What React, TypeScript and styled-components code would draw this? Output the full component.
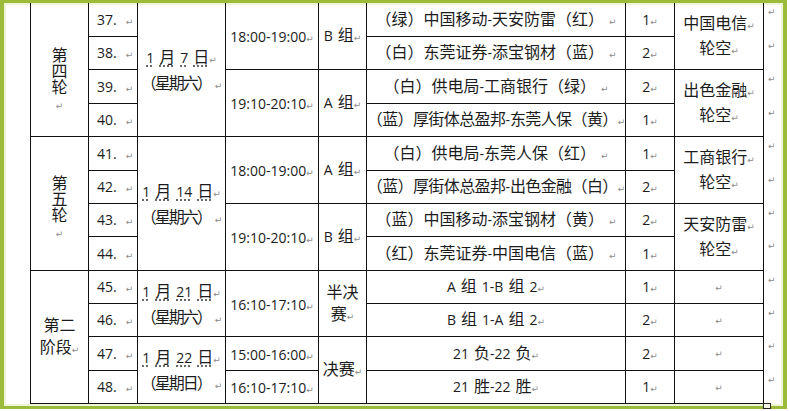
import React from "react";
import styled, { createGlobalStyle } from "styled-components";

const GlobalStyle = createGlobalStyle`
  html, body { margin: 0; padding: 0; background: #ffffff; }
  body { width: 790px; height: 411px; overflow: hidden; }
`;

const Frame = styled.div`
  position: relative;
  box-sizing: border-box;
  width: 787px;
  height: 409px;
  border-style: solid;
  border-color: #9cbb3a;
  border-width: 3px 4px 3px 4px;
  padding-left: 26px;
  background: #fff;
  box-shadow: inset 2px 2px 0 #eef5d2, inset -2px -2px 0 #eef5d2;
`;

const Grid = styled.div`
  display: grid;
  grid-template-columns: 58px 49px 88px 93px 48px 259px 49px 89px 19px;
  grid-template-rows: 34px 33px 34px 33px 34px 33px 33px 34px 33px 33px 34px 33px;
  border-left: 1px solid #111;
  width: max-content;
  font-family: "Noto Sans CJK SC", "Noto Sans", sans-serif;
  font-size: 16px;
  color: #1c1c1c;
`;

const Cell = styled.div<{ $rows?: number; $left?: boolean; $lh?: number; $pt?: number }>`
  box-sizing: border-box;
  grid-row: span ${(p) => p.$rows ?? 1};
  border-right: 1px solid #111;
  border-bottom: 1px solid #111;
  display: flex;
  align-items: center;
  justify-content: ${(p) => (p.$left ? "flex-start" : "center")};
  padding-left: ${(p) => (p.$left ? "8px" : "0")};
  padding-top: ${(p) => p.$pt ?? 0}px;
  text-align: center;
  white-space: nowrap;
  line-height: ${(p) => p.$lh ?? 20}px;
  overflow: hidden;
`;

const Para = styled.div<{ $tight?: number }>`
  white-space: pre;
  letter-spacing: ${(p) => p.$tight ?? 0}px;
`;

const EndCell = styled.div`
  display: flex;
  align-items: flex-start;
  padding: 3px 0 0 4px;
  line-height: 12px;
`;

const Latin = styled.span`
  font-family: "Open Sans", "Noto Sans", sans-serif;
  font-size: 14px;
  letter-spacing: 0;
`;

const Space = styled.span`
  display: inline-block;
  width: 5px;
`;

const Dotted = styled.span`
  text-decoration: underline dotted #444;
  text-underline-offset: 3px;
`;

const Mark = styled.span<{ $gap?: number }>`
  font-family: "DejaVu Sans", sans-serif;
  font-size: 9px;
  letter-spacing: 0;
  color: #8c8c8c;
  margin-left: ${(p) => p.$gap ?? 0}px;
`;

const Handle = styled.div`
  position: absolute;
  left: 759px;
  bottom: -3px;
  width: 6px;
  height: 4px;
  border: 1px solid #222;
  background: #f4f8e4;
`;

const CJK = /([\u2e80-\u9fff\u3000-\u303f\uff00-\uffef]+)/;

function Latins({ s }: { s: string }) {
  const parts = s.split(" ");
  return (
    <>
      {parts.map((p, i) => (
        <React.Fragment key={i}>
          {i > 0 ? <Space /> : null}
          {p ? <Latin>{p}</Latin> : null}
        </React.Fragment>
      ))}
    </>
  );
}

function Mixed({ text }: { text: string }) {
  return (
    <>
      {text
        .split(CJK)
        .filter(Boolean)
        .map((s, i) => (CJK.test(s) ? <span key={i}>{s}</span> : <Latins key={i} s={s} />))}
    </>
  );
}

const M = ({ gap }: { gap?: number }) => <Mark $gap={gap}>↵</Mark>;

function Stage({ lines, rows, pt }: { lines: string[]; rows: number; pt?: number }) {
  const vertical = lines.length > 2;
  return (
    <Cell $rows={rows} $lh={vertical ? 16 : 22} $pt={pt ?? (vertical ? 8 : 0)}>
      <Para>
        {lines.map((l, i) => (
          <React.Fragment key={i}>
            {l}
            {!vertical && i === lines.length - 1 ? <M /> : null}
            {i < lines.length - 1 || vertical ? <br /> : null}
          </React.Fragment>
        ))}
        {vertical ? <M /> : null}
      </Para>
    </Cell>
  );
}

const No = ({ n }: { n: number }) => (
  <Cell $left>
    <Para>
      <Latin>{n}.</Latin>
      <M gap={9} />
    </Para>
  </Cell>
);

const DateCell = ({ day, week, rows }: { day: string; week: string; rows: number }) => (
  <Cell $rows={rows} $lh={22} $pt={2}>
    <Para>
      <Dotted>
        <Mixed text={day} />
      </Dotted>
      <M />
      <br />
      <Para as="span" $tight={-2}>
        {week}
      </Para>
      <M gap={4} />
    </Para>
  </Cell>
);

const Time = ({ t, rows = 1 }: { t: string; rows?: number }) => (
  <Cell $rows={rows} $pt={2}>
    <Para>
      <Latin>{t}</Latin>
      <M />
    </Para>
  </Cell>
);

const Group = ({ lines, rows }: { lines: string[]; rows: number }) => (
  <Cell $rows={rows} $lh={22}>
    <Para>
      {lines.map((l, i) => (
        <React.Fragment key={i}>
          <Mixed text={l} />
          {i === lines.length - 1 ? <M /> : <br />}
        </React.Fragment>
      ))}
    </Para>
  </Cell>
);

const Match = ({ m, gap = 5, tight = 0 }: { m: string; gap?: number; tight?: number }) => (
  <Cell>
    <Para $tight={tight}>
      <Mixed text={m} />
      <M gap={gap} />
    </Para>
  </Cell>
);

const Num = ({ n }: { n: number }) => (
  <Cell>
    <Para>
      <Latin>{n}</Latin>
      <M />
    </Para>
  </Cell>
);

const Bye = ({ team, rows = 1 }: { team?: string; rows?: number }) => (
  <Cell $rows={rows} $lh={21} $pt={2}>
    {team ? (
      <Para>
        {team}
        <M />
        <br />
        轮空
        <M />
      </Para>
    ) : (
      <M />
    )}
  </Cell>
);

const End = () => (
  <EndCell>
    <M />
  </EndCell>
);

export default function App() {
  return (
    <>
      <GlobalStyle />
      <Frame>
        <Grid>
          {/* 37 */}
          <Stage lines={["第", "四", "轮"]} rows={4} pt={20} />
          <No n={37} />
          <DateCell day="1 月 7 日" week="（星期六）" rows={4} />
          <Time t="18:00-19:00" rows={2} />
          <Group lines={["B 组"]} rows={2} />
          <Match m="（绿）中国移动-天安防雷（红）" />
          <Num n={1} />
          <Bye team="中国电信" rows={2} />
          <End />
          {/* 38 */}
          <No n={38} />
          <Match m="（白）东莞证券-添宝钢材（蓝）" />
          <Num n={2} />
          <End />
          {/* 39 */}
          <No n={39} />
          <Time t="19:10-20:10" rows={2} />
          <Group lines={["A 组"]} rows={2} />
          <Match m="（白）供电局-工商银行（绿）" />
          <Num n={2} />
          <Bye team="出色金融" rows={2} />
          <End />
          {/* 40 */}
          <No n={40} />
          <Match m="（蓝）厚街体总盈邦-东莞人保（黄）" gap={0} tight={-0.6} />
          <Num n={1} />
          <End />
          {/* 41 */}
          <Stage lines={["第", "五", "轮"]} rows={4} />
          <No n={41} />
          <DateCell day="1 月 14 日" week="（星期六）" rows={4} />
          <Time t="18:00-19:00" rows={2} />
          <Group lines={["A 组"]} rows={2} />
          <Match m="（白）供电局-东莞人保（红）" />
          <Num n={1} />
          <Bye team="工商银行" rows={2} />
          <End />
          {/* 42 */}
          <No n={42} />
          <Match m="（蓝）厚街体总盈邦-出色金融（白）" gap={0} tight={-0.6} />
          <Num n={2} />
          <End />
          {/* 43 */}
          <No n={43} />
          <Time t="19:10-20:10" rows={2} />
          <Group lines={["B 组"]} rows={2} />
          <Match m="（蓝）中国移动-添宝钢材（黄）" />
          <Num n={2} />
          <Bye team="天安防雷" rows={2} />
          <End />
          {/* 44 */}
          <No n={44} />
          <Match m="（红）东莞证券-中国电信（蓝）" />
          <Num n={1} />
          <End />
          {/* 45 */}
          <Stage lines={["第二", "阶段"]} rows={4} />
          <No n={45} />
          <DateCell day="1 月 21 日" week="（星期六）" rows={2} />
          <Time t="16:10-17:10" rows={2} />
          <Group lines={["半决", "赛"]} rows={2} />
          <Match m="A 组 1-B 组 2" gap={0} />
          <Num n={1} />
          <Bye />
          <End />
          {/* 46 */}
          <No n={46} />
          <Match m="B 组 1-A 组 2" gap={0} />
          <Num n={2} />
          <Bye />
          <End />
          {/* 47 */}
          <No n={47} />
          <DateCell day="1 月 22 日" week="（星期日）" rows={2} />
          <Time t="15:00-16:00" />
          <Group lines={["决赛"]} rows={2} />
          <Match m="21 负-22 负" gap={0} />
          <Num n={2} />
          <Bye />
          <End />
          {/* 48 */}
          <No n={48} />
          <Time t="16:10-17:10" />
          <Match m="21 胜-22 胜" gap={0} />
          <Num n={1} />
          <Bye />
          <End />
        </Grid>
        <Handle />
      </Frame>
    </>
  );
}
